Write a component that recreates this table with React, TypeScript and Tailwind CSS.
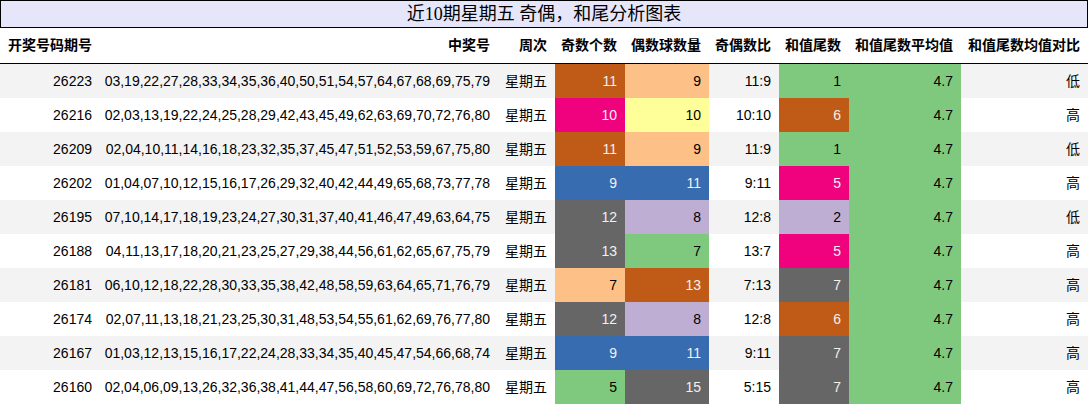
import React from "react";

const C: Record<string, string> = {
  green: "bg-[#7fc97f] text-black",
  lav: "bg-[#beaed4] text-black",
  peach: "bg-[#fdc086] text-black",
  yellow: "bg-[#ffff99] text-black",
  blue: "bg-[#386cb0] text-[#f1f1f1]",
  pink: "bg-[#f0027f] text-[#f1f1f1]",
  brown: "bg-[#bf5b17] text-[#f1f1f1]",
  gray: "bg-[#666666] text-[#f1f1f1]",
};

type Row = [string, string, number, string, number, string, string, number, string, string];

const rows: Row[] = [
  ["26223", "03,19,22,27,28,33,34,35,36,40,50,51,54,57,64,67,68,69,75,79", 11, "brown", 9, "peach", "11:9", 1, "green", "低"],
  ["26216", "02,03,13,19,22,24,25,28,29,42,43,45,49,62,63,69,70,72,76,80", 10, "pink", 10, "yellow", "10:10", 6, "brown", "高"],
  ["26209", "02,04,10,11,14,16,18,23,32,35,37,45,47,51,52,53,59,67,75,80", 11, "brown", 9, "peach", "11:9", 1, "green", "低"],
  ["26202", "01,04,07,10,12,15,16,17,26,29,32,40,42,44,49,65,68,73,77,78", 9, "blue", 11, "blue", "9:11", 5, "pink", "高"],
  ["26195", "07,10,14,17,18,19,23,24,27,30,31,37,40,41,46,47,49,63,64,75", 12, "gray", 8, "lav", "12:8", 2, "lav", "低"],
  ["26188", "04,11,13,17,18,20,21,23,25,27,29,38,44,56,61,62,65,67,75,79", 13, "gray", 7, "green", "13:7", 5, "pink", "高"],
  ["26181", "06,10,12,18,22,28,30,33,35,38,42,48,58,59,63,64,65,71,76,79", 7, "peach", 13, "brown", "7:13", 7, "gray", "高"],
  ["26174", "02,07,11,13,18,21,23,25,30,31,48,53,54,55,61,62,69,76,77,80", 12, "gray", 8, "lav", "12:8", 6, "brown", "高"],
  ["26167", "01,03,12,13,15,16,17,22,24,28,33,34,35,40,45,47,54,66,68,74", 9, "blue", 11, "blue", "9:11", 7, "gray", "高"],
  ["26160", "02,04,06,09,13,26,32,36,38,41,44,47,56,58,60,69,72,76,78,80", 5, "green", 15, "gray", "5:15", 7, "gray", "高"],
];

const headers = ["开奖号码期号", "中奖号", "周次", "奇数个数", "偶数球数量", "奇偶数比", "和值尾数", "和值尾数平均值", "和值尾数均值对比"];

const grid = "grid grid-cols-[100px_398px_57px_70px_84px_70px_70px_112px_127px]";
const cell = "flex items-center justify-end pr-2 whitespace-nowrap";

export default function App() {
  return (
    <div
      className="w-[1088px] h-[405px] bg-white text-black overflow-hidden"
      style={{ fontFamily: '"Liberation Sans", "Noto Sans CJK SC", sans-serif' }}
    >
      <div
        className="h-[28px] border border-black bg-[#e6e6fa] flex items-center justify-center text-[18px] leading-none"
        style={{ fontFamily: '"Liberation Serif", "Noto Sans CJK SC", serif' }}
      >
        近10期星期五 奇偶，和尾分析图表
      </div>
      <div className={`${grid} h-[36px] border-b border-black text-[14px] font-bold`}>
        {headers.map((h) => (
          <div key={h} className={cell}>
            {h}
          </div>
        ))}
      </div>
      {rows.map((r, i) => (
        <div key={r[0]} className={`${grid} h-[34px] text-[14px] ${i % 2 === 0 ? "bg-[#f3f3f3]" : "bg-white"}`}>
          <div className={cell}>{r[0]}</div>
          <div className={cell}>{r[1]}</div>
          <div className={cell}>星期五</div>
          <div className={`${cell} ${C[r[3]]}`}>{r[2]}</div>
          <div className={`${cell} ${C[r[5]]}`}>{r[4]}</div>
          <div className={cell}>{r[6]}</div>
          <div className={`${cell} ${C[r[8]]}`}>{r[7]}</div>
          <div className={`${cell} ${C.green}`}>4.7</div>
          <div className={cell}>{r[9]}</div>
        </div>
      ))}
    </div>
  );
}
